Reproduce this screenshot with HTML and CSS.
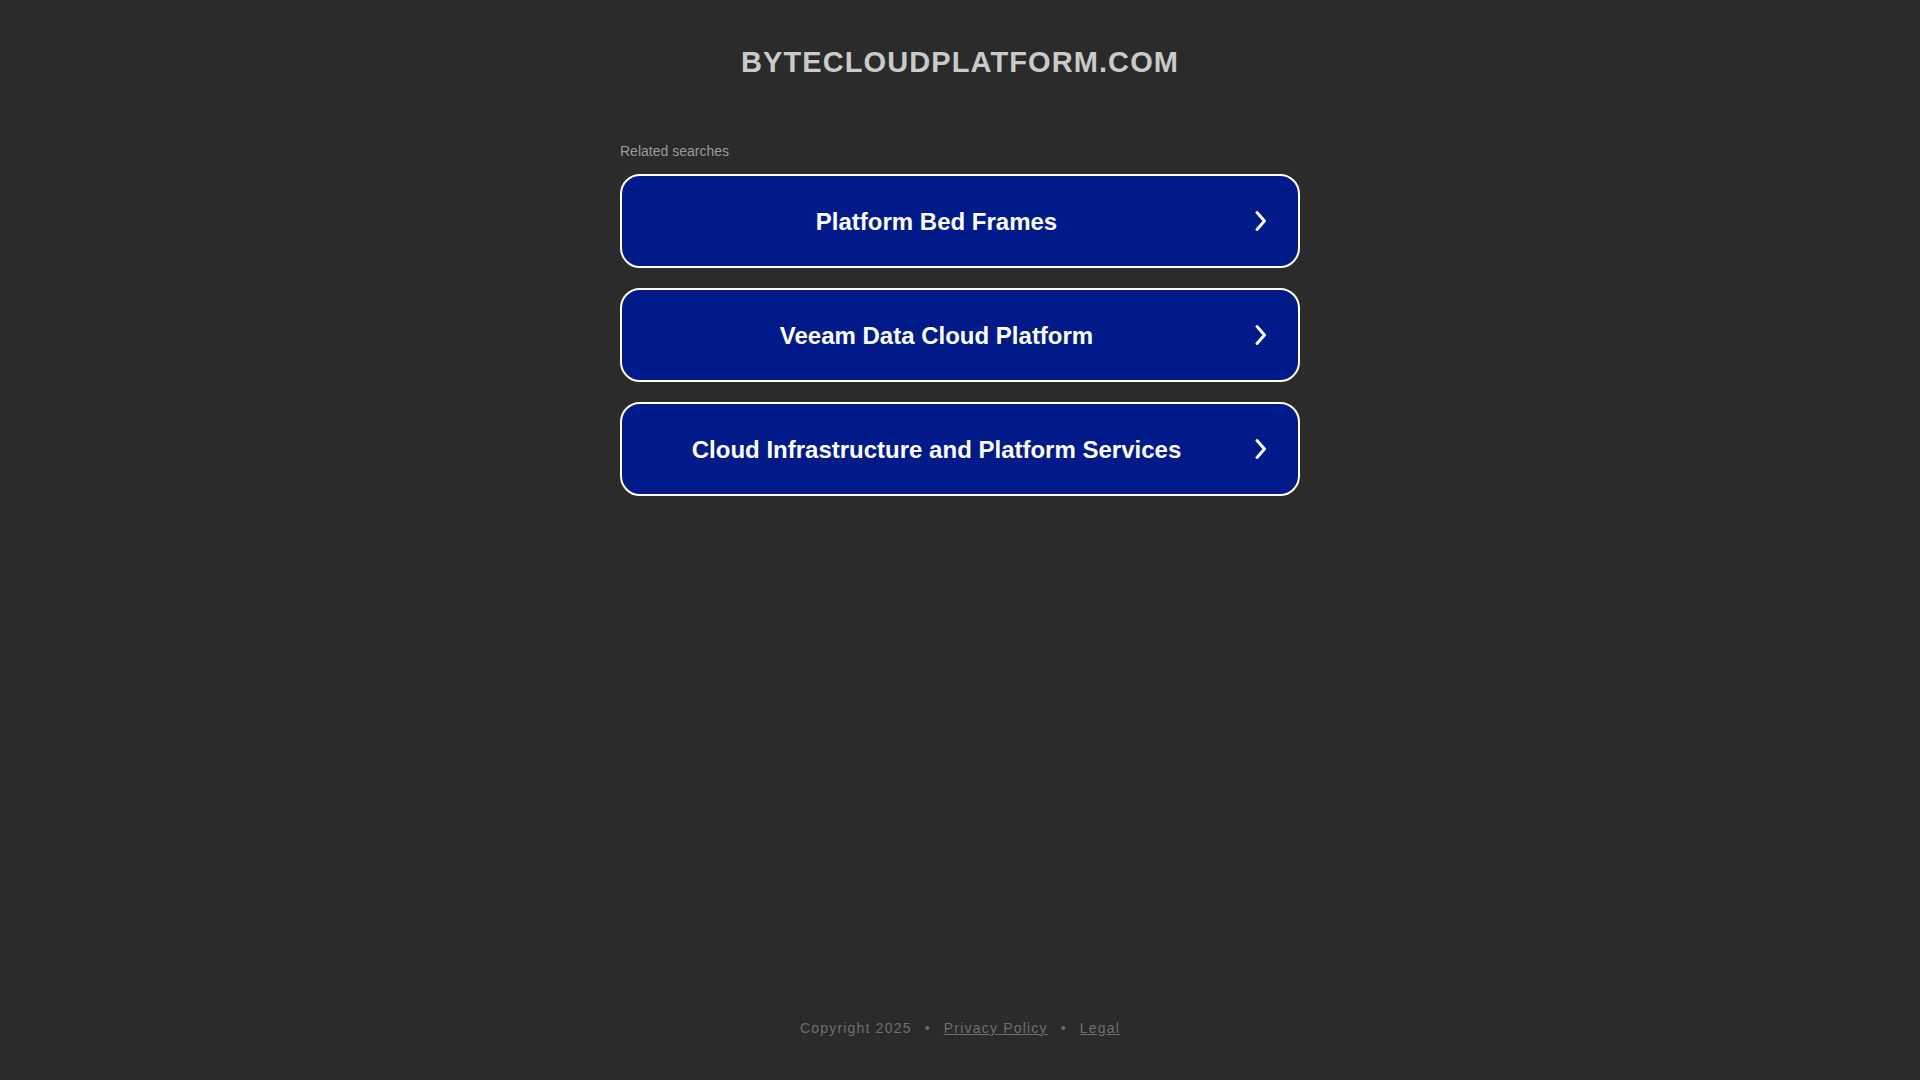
FILE: index.html
```html
<!DOCTYPE html>
<html lang="en">
<head>
<meta charset="utf-8">
<title>bytecloudplatform.com</title>
<link rel="stylesheet" href="styles.css">
</head>
<body>
<div class="page">
  <header class="header">
    <h1 class="domain">BYTECLOUDPLATFORM.COM</h1>
  </header>
  <main class="main">
    <div class="searches">
      <p class="searches-label">Related searches</p>
      <a class="search-btn" href="#"><span class="search-text">Platform Bed Frames</span><svg class="chev" viewBox="0 0 14 24" width="14" height="24"><path d="M3 3.5 L10.5 12 L3 20.5" fill="none" stroke="#fff" stroke-width="3" stroke-linecap="round" stroke-linejoin="round"/></svg></a>
      <a class="search-btn" href="#"><span class="search-text">Veeam Data Cloud Platform</span><svg class="chev" viewBox="0 0 14 24" width="14" height="24"><path d="M3 3.5 L10.5 12 L3 20.5" fill="none" stroke="#fff" stroke-width="3" stroke-linecap="round" stroke-linejoin="round"/></svg></a>
      <a class="search-btn" href="#"><span class="search-text">Cloud Infrastructure and Platform Services</span><svg class="chev" viewBox="0 0 14 24" width="14" height="24"><path d="M3 3.5 L10.5 12 L3 20.5" fill="none" stroke="#fff" stroke-width="3" stroke-linecap="round" stroke-linejoin="round"/></svg></a>
    </div>
  </main>
  <footer class="footer">
    <span>Copyright 2025</span><span class="dot">•</span><a href="#">Privacy Policy</a><span class="dot">•</span><a href="#">Legal</a>
  </footer>
</div>
</body>
</html>
```
FILE: styles.css
```css
html, body {
  margin: 0;
  padding: 0;
  background: #2b2b2b;
  font-family: Arial, "Liberation Sans", sans-serif;
}
.page {
  height: 1080px;
  display: flex;
  flex-direction: column;
  align-items: center;
}
.header {
  padding-top: 45px;
}
.domain {
  margin: 0;
  font-size: 29px;
  line-height: 34px;
  font-weight: bold;
  color: #cacaca;
  letter-spacing: 1.1px;
  text-align: center;
}
.main {
  margin-top: 64px;
  width: 680px;
}
.searches {
  display: flex;
  flex-direction: column;
}
.searches-label {
  margin: 0 0 15px 0;
  font-size: 14px;
  line-height: 16px;
  color: #9a9a9a;
}
.search-btn {
  box-sizing: border-box;
  height: 94px;
  margin-bottom: 20px;
  padding-top: 1px;
  border: 2px solid #ffffff;
  border-radius: 20px;
  background: #011a8a;
  display: flex;
  align-items: center;
  justify-content: center;
  position: relative;
  text-decoration: none;
}
.search-text {
  color: #ffffff;
  font-size: 24px;
  font-weight: bold;
  margin-right: 47px;
}
.chev {
  position: absolute;
  right: 30px;
  top: 33px;
}
.footer {
  margin-top: auto;
  margin-bottom: 44px;
  font-size: 14px;
  letter-spacing: 1.2px;
  color: #6e6e6e;
}
.footer a {
  color: #6e6e6e;
}
.dot {
  margin: 0 13px;
}
```
